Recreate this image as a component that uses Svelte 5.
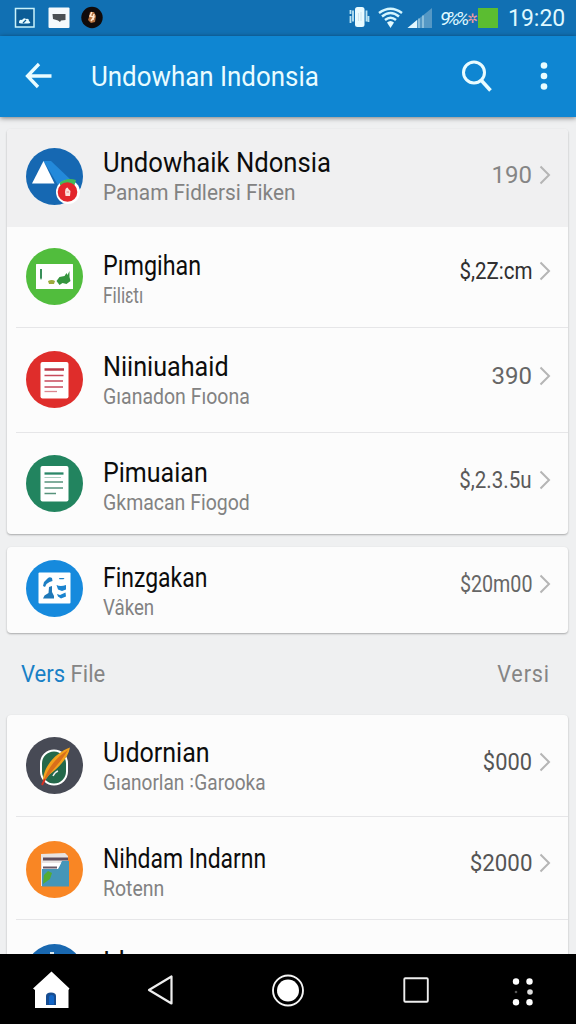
<script>
  // top / text / right are the vertical offsets of each block inside its row,
  // fit holds the horizontal condensing of title, sub and value
  const main = [
    { icon: 'drive', title: 'Undowhaik Ndonsia', sub: 'Panam Fidlersi Fiken', value: '190', height: 98, top: 19, text: 20, right: 32, tone: '#858585', active: true, fit: [0.933, 0.946, 1] },
    { icon: 'board', title: 'Pımgihan', sub: 'Filiɛtı', value: '$,2Z:cm', height: 101, top: 21, text: 25, right: 30, tone: '#303030', fit: [0.848, 0.79, 0.855] },
    { icon: 'docRed', title: 'Niiniuahaid', sub: 'Gıanadon Fıoona', value: '390', height: 105, top: 23, text: 25, right: 34, tone: '#666', fit: [0.915, 0.885, 1] },
    { icon: 'docGreen', title: 'Pimuaian', sub: 'Gkmacan Fiogod', value: '$,2.3.5u', height: 101, top: 22, text: 26, right: 33, tone: '#5a5a5a', fit: [0.91, 0.885, 0.855] },
  ];
  const single = [
    { icon: 'people', title: 'Finzgakan', sub: 'Vâken', value: '$20m00', height: 86, top: 13, text: 17, right: 23, tone: '#666', fit: [0.835, 0.85, 0.82] },
  ];
  const files = [
    { icon: 'feather', title: 'Uıdornian', sub: 'Gıanorlan ꞉Garooka', value: '$000', height: 102, top: 22, text: 24, right: 33, tone: '#555', fit: [0.91, 0.865, 0.91] },
    { icon: 'folder', title: 'Nihdam Indarnn', sub: 'Rotenn', value: '$2000', height: 103, top: 24, text: 28, right: 32, tone: '#555', fit: [0.834, 0.885, 0.93] },
    { icon: 'info', title: 'Id', value: '$000', height: 100, top: 24, text: 28, right: 32, tone: '#555', fit: [0.95, 1, 0.91] },
  ];
</script>

{#snippet glyph(name)}
  <svg class="icon" viewBox="0 0 57 57">
    {#if name === 'drive'}
      <circle cx="28.500" cy="28.500" r="28.500" fill="#1668b2" />
      <path d="M17.500 13 L25 13 L46 33 L32 37 Z" fill="#2389da" />
      <path d="M17.500 13 L28.500 35.500 H6 Z" fill="#fff" />
      <circle cx="42" cy="44" r="12" fill="#fff" />
      <path d="M34 34.500 Q41 29 50 32 L48.500 37 H34 Z" fill="#42b95a" />
      <circle cx="41.500" cy="44" r="9.800" fill="#e3262c" />
      <path d="M39.500 41 q2-3 3 0 l2 2 -0.500 5 h-4.500 l-0.500-4 Z" fill="#fbe0dc" />
      <path d="M40.500 44 h2.500" stroke="#e58080" />
    {:else if name === 'board'}
      <circle cx="28.500" cy="28.500" r="28.500" fill="#51bd3d" />
      <rect x="10" y="16" width="37" height="25" rx="0.500" fill="#fff" />
      <path d="M14 21 h2 v9 l-1 2 -1-2 Z" fill="#388f5a" />
      <path d="M22 33 q4-2 7 0 l-1 3 h-5 Z" fill="#9dab3c" />
      <path d="M30.500 33 l3-4 5 -1 2-3 1 2 2-4 0 6 1 4 -4 3 -4-1 -3 2 Z" fill="#35953e" />
    {:else if name === 'docRed'}
      <circle cx="28.500" cy="28.500" r="28.500" fill="#df2d2b" />
      <rect x="14.500" y="11" width="28" height="36.500" rx="2" fill="#fff" />
      <path d="M18.500 18.500 H38" stroke="#bd3b4a" stroke-width="2.500" />
      <path d="M18.500 24.500 H37.500 M18.500 30 H37 M18.500 36 H37" stroke="#c84a5c" stroke-width="1.700" />
      <path d="M18.500 40.500 H31" stroke="#dc8790" stroke-width="1.300" />
    {:else if name === 'docGreen'}
      <circle cx="28.500" cy="28.500" r="28.500" fill="#22845f" />
      <rect x="14.500" y="11" width="28" height="35.500" rx="2" fill="#fff" />
      <path d="M18.500 18.500 H37.500" stroke="#2b8768" stroke-width="2.300" />
      <path d="M18.500 22.500 H35" stroke="#a9cdbf" stroke-width="1" />
      <path d="M18.500 27 H37 M18.500 33 H37 M18.500 38.500 H30" stroke="#57937c" stroke-width="1.600" />
    {:else if name === 'people'}
      <circle cx="28.500" cy="28.500" r="28.500" fill="#168add" />
      <rect x="12.500" y="12.500" width="32" height="31" rx="1" fill="#fff" />
      <path d="M21 19 q2-3 5 -1 l0.500 3 -3 1 -3 2 -1.500 3 -2-1 1-4 Z" fill="#1d7fc4" />
      <path d="M23 27 l3-1 0 6 2 4 0 2.500 -11 0 1.500-3 4-2.500 Z" fill="#1f78b8" />
      <path d="M33 18 h5.500 l-1 1.300 h-4 Z" fill="#1d7fc4" />
      <path d="M30.500 25 q4 2 9.500 0 v4.500 l-4 1.500 -4 -1.500 Z M31 34 l3 1 5.500-2.500 0.500 4 -5 2 -3-2 Z" fill="#1b84cf" />
    {:else if name === 'feather'}
      <circle cx="28.500" cy="28.500" r="28.500" fill="#474a55" />
      <rect x="15" y="13.500" width="26" height="34" rx="13" fill="#24684a" stroke="#fff" stroke-width="2" />
      <path d="M17 46 C16 31 29 16 44 10.500 C42 22 31 32 23 38 Z" fill="#f3a21d" />
      <path d="M17 46 C21 32 30 20 42 13 C35 25 26 33 17 46 Z" fill="#d96f1b" />
      <path d="M16 48 L19 42" stroke="#d53023" stroke-width="2" />
      <path d="M27 39 q2-4 5-5" stroke="#eee" stroke-width="1.500" fill="none" />
    {:else if name === 'folder'}
      <circle cx="28.500" cy="28.500" r="28.500" fill="#f98624" />
      <path d="M15 13 L39 12 L42 15 V45 H15 Z" fill="#e9e4e2" />
      <path d="M33 26 L36 20 H43 V45.500 H16 V28 H31 Z" fill="#4496b8" />
      <path d="M16 22 H35 L32 28 H16 Z" fill="#fff" />
      <path d="M17 18 H42" stroke="#604e5d" stroke-width="3" />
      <path d="M17 26.500 H31" stroke="#695966" stroke-width="2" />
      <path d="M18 34 L22 30 L26 32 L24 38 L17 43 Z" fill="#55ac32" />
    {:else}
      <circle cx="28.500" cy="28.500" r="28.500" fill="#1968b0" />
      <path d="M24 9 h4" stroke="#d9e7ee" stroke-width="2" />
    {/if}
  </svg>
{/snippet}

{#snippet row(item)}
  <div class="row" class:active={item.active} style="height: {item.height}px">
    <div style="padding-top: {item.top}px">{@render glyph(item.icon)}</div>
    <div class="text" style="padding-top: {item.text}px">
      <div class="title" style="transform: scaleX({item.fit[0]})">{item.title}</div>
      {#if item.sub}
        <div class="sub" style="transform: scaleX({item.fit[1]})">{item.sub}</div>
      {/if}
    </div>
    <div class="value" style="padding-top: {item.right}px; color: {item.tone}">
      <span style="transform: scaleX({item.fit[2]})">{item.value}</span>
      <svg width="12" height="20" viewBox="0 0 12 20">
        <path d="M1.500 1.500 L10 10 L1.500 18.500" fill="none" stroke="#b5b5b5" stroke-width="2" />
      </svg>
    </div>
  </div>
{/snippet}

<div class="screen">
  <div class="status">
    <svg width="110" height="36" viewBox="0 0 110 36">
      <rect x="15.500" y="8.500" width="18.500" height="18.500" fill="#0c5c96" stroke="#c9f2fb" stroke-width="1.500" />
      <path d="M19 23 q0-4 3-3 q2 -3 4 -1 q3-1 3 2 q3 2 -1 2.500 h-7 Z" fill="#e8fbff" />
      <path d="M23 23 l3-3" stroke="#0c5c96" stroke-width="1.200" />
      <rect x="48.500" y="7.500" width="21" height="20.500" rx="1" fill="#f5f9fc" />
      <path d="M52.500 14 H65.500 V20 L61 20.500 L60 22 L58 20.500 L53 19 Z" fill="#4b4f53" />
      <circle cx="92" cy="17.500" r="10.700" fill="#100b0b" />
      <path d="M90 12 l4 0 2 4 -1 6 -4 1 -3-3 1-3 Z" fill="#b5713f" />
      <path d="M92 12 l-2 4 4 1 -3 4 M94 14 l-1 6" stroke="#ffe8cf" stroke-width="1.500" fill="none" />
    </svg>
    <div class="system">
      <svg width="90" height="36" viewBox="0 0 90 36">
        <rect x="13" y="7" width="9.500" height="20" rx="2.500" fill="#e9fbff" />
        <path d="M8.500 10 v4 M8.500 16 v7 M11 10.500 v11 M24.500 10.500 v11 M26.500 16 v6" stroke="#b9e3f3" stroke-width="1.800" />
        <path d="M16.500 13 v8 M19 12 v9" stroke="#cfe6ef" />
        <g fill="none" stroke="#d4f6ff" stroke-width="2.500">
          <path d="M37 13 Q48.500 4.500 60 13" />
          <path d="M40 16.500 Q48.500 9.500 57 16.500" />
          <path d="M43 20 Q48.500 15.500 54 20" />
        </g>
        <path d="M45 22.500 Q48.500 19.500 52 22.500 L48.500 28 Z" fill="#e5fbff" />
        <path d="M65.500 28 L90 8 V28 Z" fill="#5598c5" />
        <path d="M65.500 28 L75 20 V28 Z" fill="#e2f7ff" />
        <path d="M77 18.500 V28 M81 15.500 V28" stroke="#a9d3e7" stroke-width="1.300" />
      </svg>
      <span class="percent">9%%</span>
      <span class="charge">✲</span>
      <span class="battery"></span>
      <span class="clock">19:20</span>
    </div>
  </div>

  <header>
    <svg width="30" height="30" viewBox="0 0 30 30">
      <path d="M15 3 L3.500 15 L14 26 M4 15 H27.500" fill="none" stroke="#e9fcff" stroke-width="3.300" />
    </svg>
    <h1>Undowhan Indonsia</h1>
    <svg width="32" height="34" viewBox="0 0 32 34">
      <circle cx="13" cy="13.500" r="10.500" fill="none" stroke="#e9fcff" stroke-width="3" />
      <path d="M20 21 L29.500 31.500" stroke="#e9fcff" stroke-width="3.600" />
    </svg>
    <svg class="more" width="10" height="34" viewBox="0 0 10 34">
      <g fill="#e9fcff">
        <circle cx="5" cy="6.500" r="3.300" />
        <circle cx="5" cy="17" r="3.300" />
        <circle cx="5" cy="27.500" r="3.300" />
      </g>
    </svg>
  </header>

  <main>
    <section class="card">
      {#each main as item}{@render row(item)}{/each}
    </section>
    <section class="card">
      {#each single as item}{@render row(item)}{/each}
    </section>
    <div class="heading">
      <span class="vers"><b>Vers</b> File</span>
      <span class="versi">Versi</span>
    </div>
    <section class="card">
      {#each files as item}{@render row(item)}{/each}
    </section>
  </main>

  <nav>
    <svg width="576" height="70" viewBox="0 0 576 70">
      <path d="M51.500 17.500 L69.500 34.500 L68.500 36 V54 H35 V36 L33 34.500 Z" fill="#fff" />
      <path d="M46 51 V42 Q46 38.500 51 38.500 Q56 38.500 56 42 V51 Z" fill="#174d91" />
      <path d="M49 50.500 V43 Q49 41 51.500 41 Q54 41 54 43 V50.500 Z" fill="#1266c8" />
      <path d="M171.500 22.500 V49.500 L149 36 Z" fill="none" stroke="#eee" stroke-width="2.200" stroke-linejoin="round" />
      <circle cx="288" cy="36.500" r="15" fill="none" stroke="#f4f4f4" stroke-width="1.900" />
      <circle cx="288" cy="36.500" r="11" fill="#fff" />
      <rect x="404.300" y="24.300" width="23.500" height="23.500" rx="1" fill="none" stroke="#eee" stroke-width="1.900" />
      <g fill="#fff">
        <circle cx="516" cy="27.500" r="3.200" />
        <circle cx="529.500" cy="27.500" r="3.200" />
        <circle cx="516" cy="38" r="1.300" fill="#555" />
        <circle cx="530" cy="38" r="2.800" fill="#ddd" />
        <circle cx="516" cy="48.300" r="3.200" />
        <circle cx="529.500" cy="48.300" r="3.200" />
      </g>
    </svg>
  </nav>
</div>

<style>
  :global(body) {
    margin: 0;
  }

  .screen {
    display: flex;
    flex-direction: column;
    width: 576px;
    height: 1024px;
    overflow: hidden;
    background: #eff0f1;
    font-family: Roboto, 'Liberation Sans', sans-serif;
  }

  svg {
    display: block;
    flex: none;
  }

  .status {
    display: flex;
    flex: none;
    justify-content: space-between;
    height: 36px;
    background: #1170b3;
  }

  .system {
    display: flex;
    align-items: center;
    padding-right: 11px;
    color: #dff8ff;
  }

  .percent {
    width: 27px;
    margin-left: 8px;
    font-size: 19px;
    font-style: italic;
    letter-spacing: -4px;
    white-space: nowrap;
  }

  .charge {
    width: 11px;
    color: #ee9ba0;
    font-size: 13px;
  }

  .battery {
    width: 20px;
    height: 20px;
    background: #5bbd31;
  }

  .clock {
    width: 57px;
    margin-left: 10px;
    padding-top: 1px;
    font-size: 23px;
  }

  header {
    z-index: 1;
    display: flex;
    flex: none;
    align-items: center;
    box-sizing: border-box;
    height: 81px;
    padding: 0 27px 2px 24px;
    background: #0f86d2;
    box-shadow: 0 1px 5px rgba(0, 0, 0, 0.5);
  }

  h1 {
    flex: 1;
    margin: 3px 0 0 37px;
    color: #e9fcff;
    font-size: 28px;
    font-weight: 400;
    line-height: 34px;
    white-space: nowrap;
    transform: scaleX(0.925);
    transform-origin: left;
  }

  .more {
    margin-left: 46px;
  }

  main {
    flex: 1;
    min-height: 0;
    padding: 12px 8px 0 7px;
    overflow: hidden;
  }

  .card {
    overflow: hidden;
    border-radius: 4px;
    background: #fcfcfc;
    box-shadow: 0 1px 2px rgba(0, 0, 0, 0.3);
  }

  .card + .card {
    margin-top: 13px;
  }

  .row {
    display: flex;
    align-items: flex-start;
    box-sizing: border-box;
    padding: 0 17px 0 19px;
    background: linear-gradient(#e6e6e8, #e6e6e8) no-repeat 9px 100% / 100% 1px;
  }

  .row:last-child {
    background: none;
  }

  .row.active {
    background: #f0f0f1;
  }

  .icon {
    width: 57px;
    height: 57px;
  }

  .text {
    flex: 1;
    margin-left: 20px;
    white-space: nowrap;
  }

  .title,
  .sub {
    transform-origin: left;
  }

  .title {
    color: #0c0c0c;
    font-size: 27.5px;
    line-height: 28px;
  }

  .sub {
    margin-top: 2px;
    color: #828282;
    font-size: 22px;
    line-height: 27px;
  }

  .value {
    display: flex;
    align-items: center;
    gap: 7px;
    font-size: 24px;
    line-height: 28px;
  }

  .value span {
    transform-origin: right;
  }

  .heading {
    display: flex;
    align-items: center;
    justify-content: space-between;
    box-sizing: border-box;
    height: 82px;
    padding: 0 18px 2px 14px;
    color: #858585;
    font-size: 24.5px;
  }

  .heading b {
    color: #1880c6;
    font-weight: 400;
  }

  .vers {
    transform: scaleX(0.9);
    transform-origin: left;
  }

  .versi {
    letter-spacing: 1px;
    transform: scaleX(0.88);
    transform-origin: right;
  }

  nav {
    flex: none;
    height: 70px;
    background: #000;
  }
</style>
